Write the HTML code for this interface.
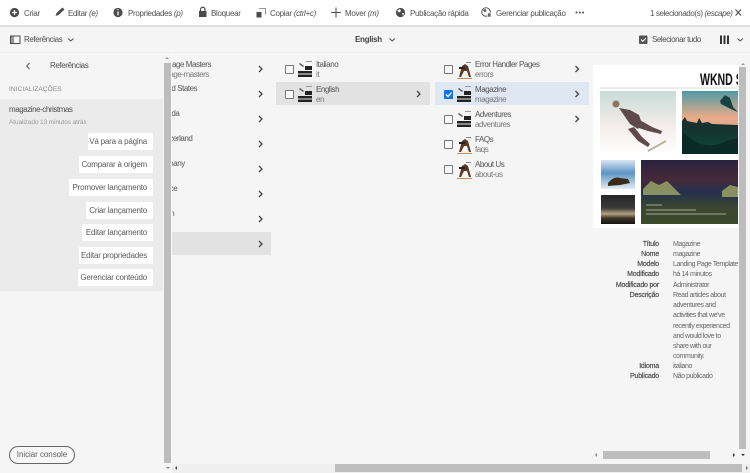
<!DOCTYPE html>
<html><head><meta charset="utf-8">
<style>
html,body{margin:0;padding:0;width:750px;height:473px;overflow:hidden;background:#f5f5f5;font-family:"Liberation Sans",sans-serif;color:#555;}
.a{position:absolute;white-space:nowrap;}
.t{position:absolute;white-space:nowrap;font-size:8px;line-height:10px;letter-spacing:-.3px;color:#505050;}
.n{letter-spacing:-.45px;margin-top:1px;color:#555;}
.b{margin-top:1px;}
.s{color:#777;}
i.o{font-style:italic;}
.btn{position:absolute;background:#fff;height:17px;line-height:18px;font-size:8px;letter-spacing:-.2px;color:#5a5a5a;text-align:right;padding-right:6px;box-sizing:border-box;border-radius:1px;}
.cb{position:absolute;border:1px solid #777;background:#f8f8f8;border-radius:1px;box-sizing:content-box;width:7px;height:7px;}
.m{position:absolute;font-size:7px;line-height:10px;letter-spacing:-.4px;white-space:nowrap;margin-top:1px;}
.l{right:91px;color:#444;letter-spacing:-.2px;-webkit-text-stroke:.15px #444;}
.v{left:673px;color:#666;}
</style></head><body>

<!-- top bar -->
<div class="a" style="left:0;top:0;width:750px;height:25px;background:#fff;"></div>
<div class="a" style="left:0;top:25px;width:750px;height:2px;background:#dedede;"></div>
<div class="a" style="left:0;top:52px;width:750px;height:1px;background:#efefef;"></div>

<svg class="a" style="left:0;top:0" width="750" height="53" viewBox="0 0 750 53">
 <circle cx="14.500" cy="12.500" r="4.600" fill="#4b4b4b"/><path d="M14.500 10v5M12 12.500h5" stroke="#fff" stroke-width="1.200"/>
 <path d="M55.500 16l1-3 6-5.500 2 2-6 5.500z" fill="#4b4b4b"/>
 <circle cx="118" cy="12.500" r="4.600" fill="#4b4b4b"/><path d="M118 11.500v3.800M118 9.300v1" stroke="#fff" stroke-width="1.300"/>
 <rect x="199" y="11" width="7.500" height="6" fill="#4b4b4b"/><path d="M200.500 11V9.500a2.200 2.200 0 0 1 4.500 0V11" fill="none" stroke="#4b4b4b" stroke-width="1.200"/>
 <rect x="256.500" y="12" width="5" height="5.500" fill="#4b4b4b"/><path d="M259 8.500h6.500v6" fill="none" stroke="#777" stroke-width=".8"/>
 <path d="M336 7.500v10M331 12.500h10" stroke="#4b4b4b" stroke-width="1"/>
 <circle cx="400.500" cy="12.500" r="4.600" fill="#4b4b4b"/><path d="M397 10.500l3-1.500 1 2-2 1.500zM402 13l2 0-1 3z" fill="#fff"/>
 <circle cx="486" cy="12" r="4.300" fill="none" stroke="#555" stroke-width="1"/><path d="M483 10l2.500-1 1 2-2 1.500z" fill="#555"/><rect x="487.500" y="13" width="3.500" height="4" fill="#666" stroke="#fff" stroke-width=".6"/>
 <circle cx="576.500" cy="12.500" r="1" fill="#4b4b4b"/><circle cx="579.800" cy="12.500" r="1" fill="#4b4b4b"/><circle cx="583" cy="12.500" r="1" fill="#4b4b4b"/>
 <path d="M735.500 9.500l5.500 6M741 9.500l-5.500 6" stroke="#4b4b4b" stroke-width="1.100"/>
 <rect x="10.500" y="36" width="9.500" height="7.500" fill="none" stroke="#4b4b4b" stroke-width="1"/><rect x="10.500" y="36" width="3.500" height="7.500" fill="#4b4b4b" opacity=".55"/>
 <path d="M68 38.500l2.700 2.500 2.700-2.500" fill="none" stroke="#4b4b4b" stroke-width="1"/>
 <path d="M389.500 38.500l2.700 2.500 2.700-2.500" fill="none" stroke="#4b4b4b" stroke-width="1"/>
 <rect x="639" y="35.500" width="8.500" height="8.500" rx="1" fill="#555"/><path d="M641 39.500l1.800 1.800 3-3" fill="none" stroke="#fff" stroke-width="1"/>
 <path d="M721 35.500v8.500M724.500 35.500v8.500M728 35.500v8.500" stroke="#333" stroke-width="2"/>
 <path d="M737.500 38.500l2.700 2.500 2.700-2.500" fill="none" stroke="#4b4b4b" stroke-width="1"/>
</svg>

<div class="t" style="left:24px;top:8px;margin-top:.5px;">Criar</div>
<div class="t" style="left:68px;top:8px;margin-top:.5px;">Editar <i class="o">(e)</i></div>
<div class="t" style="left:128px;top:8px;margin-top:.5px;">Propriedades <i class="o">(p)</i></div>
<div class="t" style="left:211px;top:8px;margin-top:.5px;">Bloquear</div>
<div class="t" style="left:270px;top:8px;margin-top:.5px;">Copiar <i class="o">(ctrl+c)</i></div>
<div class="t" style="left:345px;top:8px;margin-top:.5px;">Mover <i class="o">(m)</i></div>
<div class="t" style="left:410px;top:8px;margin-top:.5px;">Publicação rápida</div>
<div class="t" style="left:496px;top:8px;margin-top:.5px;">Gerenciar publicação</div>
<div class="t" style="left:650px;top:8px;margin-top:.5px;letter-spacing:-.38px;">1 selecionado(s) <i class="o">(escape)</i></div>
<div class="t b" style="left:24px;top:34px;letter-spacing:-.4px;">Referências</div>
<div class="t b" style="left:355px;top:34px;font-weight:bold;color:#444;">English</div>
<div class="t b" style="left:652px;top:34px;letter-spacing:-.45px;">Selecionar tudo</div>

<!-- sidebar -->
<svg class="a" style="left:0;top:53px" width="60" height="26"><path d="M29.500 10l-2.800 3 2.800 3" fill="none" stroke="#555" stroke-width="1"/></svg>
<div class="t" style="left:50px;top:61px;letter-spacing:-.4px;">Referências</div>
<div class="t" style="left:9px;top:85px;font-size:6.500px;color:#888;letter-spacing:.1px;">INICIALIZAÇÕES</div>
<div class="a" style="left:0;top:99px;width:163px;height:192px;background:#ebebeb;"></div>
<div class="t" style="left:9px;top:105px;letter-spacing:-.45px;">magazine-christmas</div>
<div class="t" style="left:9px;top:118px;font-size:6.500px;color:#999;letter-spacing:-.1px;">Atualizado 13 minutos atrás</div>
<div class="btn" style="left:88px;top:133px;width:65px;">Vá para a página</div>
<div class="btn" style="left:79px;top:156px;width:74px;">Comparar à origem</div>
<div class="btn" style="left:69px;top:179px;width:84px;">Promover lançamento</div>
<div class="btn" style="left:86px;top:202px;width:67px;">Criar lançamento</div>
<div class="btn" style="left:82px;top:224px;width:71px;">Editar lançamento</div>
<div class="btn" style="left:79px;top:247px;width:74px;">Editar propriedades</div>
<div class="btn" style="left:78px;top:269px;width:75px;">Gerenciar conteúdo</div>
<div class="a" style="left:9px;top:446px;width:66px;height:18px;border:1px solid #666;border-radius:9px;box-sizing:border-box;text-align:center;font-size:8px;line-height:16px;color:#5f5f5f;letter-spacing:-.05px;background:#f7f7f7;">Iniciar console</div>

<!-- sidebar scrollbar -->
<div class="a" style="left:164px;top:63px;width:7px;height:400px;background:#bdbdbd;"></div>
<div class="a" style="left:171px;top:53px;width:1px;height:420px;background:#fafafa;"></div>

<!-- column 1 -->
<div class="a" style="left:172px;top:53px;width:100px;height:411px;overflow:hidden;">
 <div class="a" style="left:0;top:179px;width:99px;height:23px;background:#e2e2e2;"></div>
 <div class="t n" style="left:-20px;top:6px;">Language Masters</div>
 <div class="t n s" style="left:-20px;top:16px;">language-masters</div>
 <div class="t n" style="left:-17px;top:30px;">United States</div>
 <div class="t n" style="left:-18px;top:55px;">Canada</div>
 <div class="t n" style="left:-16px;top:80px;">Switzerland</div>
 <div class="t n" style="left:-17px;top:105px;">Germany</div>
 <div class="t n" style="left:-17px;top:130px;">France</div>
 <div class="t n" style="left:-16px;top:155px;">Spain</div>
</div>
<svg class="a" style="left:255px;top:60px" width="12" height="195">
 <g fill="none" stroke="#444" stroke-width="1.300">
 <path d="M4 6l3 3-3 3"/><path d="M4 31l3 3-3 3"/><path d="M4 56l3 3-3 3"/><path d="M4 81l3 3-3 3"/><path d="M4 106l3 3-3 3"/><path d="M4 131l3 3-3 3"/><path d="M4 156l3 3-3 3"/><path d="M4 181l3 3-3 3"/>
 </g>
</svg>

<!-- column 2 -->
<div class="a" style="left:276px;top:82px;width:154px;height:23px;background:#e2e2e2;"></div>
<div class="cb" style="left:285px;top:65px;"></div>
<div class="cb" style="left:285px;top:90px;"></div>
<div class="t n" style="left:316px;top:59px;">Italiano</div><div class="t n s" style="left:316px;top:69px;">it</div>
<div class="t n" style="left:316px;top:84px;">English</div><div class="t n s" style="left:316px;top:94px;">en</div>

<!-- column 3 -->
<div class="a" style="left:435px;top:82px;width:154px;height:23px;background:#dee7f2;"></div>
<div class="cb" style="left:444px;top:65px;"></div>
<div class="a" style="left:444px;top:90px;width:9px;height:9px;background:#1473e6;border-radius:1px;"></div>
<div class="cb" style="left:444px;top:115px;"></div>
<div class="cb" style="left:444px;top:140px;"></div>
<div class="cb" style="left:444px;top:165px;"></div>
<div class="t n" style="left:475px;top:59px;">Error Handler Pages</div><div class="t n s" style="left:475px;top:69px;">errors</div>
<div class="t n" style="left:475px;top:84px;">Magazine</div><div class="t n s" style="left:475px;top:94px;">magazine</div>
<div class="t n" style="left:475px;top:109px;">Adventures</div><div class="t n s" style="left:475px;top:119px;">adventures</div>
<div class="t n" style="left:475px;top:134px;">FAQs</div><div class="t n s" style="left:475px;top:144px;">faqs</div>
<div class="t n" style="left:475px;top:159px;">About Us</div><div class="t n s" style="left:475px;top:169px;">about-us</div>

<svg class="a" style="left:270px;top:55px" width="330" height="130">
 <path d="M176 39.500l2 2 3.500-4" fill="none" stroke="#fff" stroke-width="1.300"/>
 <g fill="none" stroke="#444" stroke-width="1.300">
  <path d="M147 36l3 3-3 3"/>
  <path d="M305.500 11l3 3-3 3"/><path d="M305.500 36l3 3-3 3"/><path d="M305.500 61l3 3-3 3"/>
 </g>
 <g fill="#222" transform="translate(0,-1)">
  <path d="M28 17h14v2.500H28zM28 20.500h14v2.500H28zM35 12h7v4h-7z"/><path d="M30 9l4 3-1 1-4-3z" fill="#555"/><path d="M36 7h6v1h-6z" fill="#999"/>
  <path d="M28 42h14v2.500H28zM28 45.500h14v2.500H28zM35 37h7v4h-7z"/><path d="M30 34l4 3-1 1-4-3z" fill="#555"/><path d="M36 32h6v1h-6z" fill="#999"/>
  <path d="M187 42h14v2.500h-14zM187 45.500h14v2.500h-14zM194 37h7v4h-7z"/><path d="M189 34l4 3-1 1-4-3z" fill="#555"/><path d="M195 32h6v1h-6z" fill="#999"/>
  <path d="M187 67h14v2.500h-14zM187 70.500h14v2.500h-14zM194 62h7v4h-7z"/><path d="M189 59l4 3-1 1-4-3z" fill="#555"/><path d="M195 57h6v1h-6z" fill="#999"/>
 </g>
 <g>
  <path d="M192 11l3-2 3 2 3 11h-2l-2-6h-3l-3 6h-2z" fill="#5a3a22"/><path d="M189 12h6v2h-6z" fill="#222"/><path d="M187 23h15v1h-15z" fill="#c98a55"/><path d="M196 7h5v1h-5z" fill="#888"/>
  <path d="M192 86l3-2 3 2 3 11h-2l-2-6h-3l-3 6h-2z" fill="#5a3a22"/><path d="M189 87h6v2h-6z" fill="#222"/><path d="M187 98h15v1h-15z" fill="#c98a55"/><path d="M196 82h5v1h-5z" fill="#888"/>
  <path d="M192 111l3-2 3 2 3 11h-2l-2-6h-3l-3 6h-2z" fill="#5a3a22"/><path d="M189 112h6v2h-6z" fill="#222"/><path d="M187 123h15v1h-15z" fill="#c98a55"/><path d="M196 107h5v1h-5z" fill="#888"/>
 </g>
</svg>

<!-- preview -->
<div class="a" style="left:593px;top:65px;width:146px;height:163px;background:#fff;overflow:hidden;"></div>
<div class="a" style="left:700px;top:70px;font-size:17px;line-height:20px;font-weight:bold;color:#111;transform:scaleX(.62);transform-origin:0 0;">WKND SITE</div>
<div class="a" style="left:738px;top:65px;width:12px;height:163px;background:#f5f5f5;"></div>
<div class="a" style="left:600px;top:87px;width:138px;height:2px;background:#ececec;"></div>
<svg class="a" style="left:600px;top:91px" width="138" height="134" viewBox="0 0 138 134">
 <defs>
  <linearGradient id="g1" x1="0" y1="0" x2="0" y2="1"><stop offset="0" stop-color="#c9dcd8"/><stop offset=".55" stop-color="#f3ecea"/><stop offset="1" stop-color="#fff"/></linearGradient>
  <linearGradient id="g2" x1="0" y1="0" x2="0" y2="1"><stop offset="0" stop-color="#4f9aa6"/><stop offset=".42" stop-color="#e9ab8a"/><stop offset=".56" stop-color="#e0a88a"/><stop offset=".6" stop-color="#15322f"/><stop offset="1" stop-color="#0f4a42"/></linearGradient>
  <linearGradient id="g3" x1="0" y1="0" x2="0" y2="1"><stop offset="0" stop-color="#d8e5f2"/><stop offset=".45" stop-color="#5f94c6"/><stop offset=".75" stop-color="#a7c5de"/><stop offset="1" stop-color="#e2ecf2"/></linearGradient>
  <linearGradient id="g4" x1="0" y1="0" x2="0" y2="1"><stop offset="0" stop-color="#26262a"/><stop offset=".45" stop-color="#3a3a38"/><stop offset=".65" stop-color="#b0a27f"/><stop offset=".8" stop-color="#3b3528"/><stop offset="1" stop-color="#141412"/></linearGradient>
  <linearGradient id="g5" x1="0" y1="0" x2="0" y2="1"><stop offset="0" stop-color="#2a2240"/><stop offset=".3" stop-color="#46293a"/><stop offset=".5" stop-color="#24304f"/><stop offset=".75" stop-color="#3b4630"/><stop offset="1" stop-color="#3a4a2a"/></linearGradient>
 </defs>
 <rect x="0" y="0" width="76" height="63" fill="url(#g1)"/>
 <path d="M19 17L30 19L39 24L42 33L38 38L30 33Z" fill="#5e4a4a"/>
 <path d="M38 28L52 36L62 40L61 43L48 40L36 36Z" fill="#5e4a4a"/>
 <path d="M34 36L42 46L50 53L48 56L38 50L28 38Z" fill="#5e4a4a"/>
 <path d="M48 60L66 50" stroke="#b9b2a5" stroke-width="2"/>
 <circle cx="16" cy="13" r="3.500" fill="#8a7560"/>
 <rect x="82" y="0" width="56" height="63" fill="url(#g2)"/>
 <path d="M82 30l3-4 2 4 10 2 2-5 3 5 6-1 4 2 26 1v4H82z" fill="#15322f"/>
 <path d="M82 40q20 22 45 10l11-3v16H82z" fill="#0a2a27"/>
 <path d="M120 10l5-6 5 3 3 9 5 5-5-2-6-3-6-3z" fill="#17403f"/>
 <rect x="1" y="69" width="34" height="29" fill="url(#g3)"/>
 <path d="M8 92q6-7 12-5l8 1 2 4-10 2-12 1z" fill="#3a2a18"/>
 <rect x="1" y="104" width="34" height="29" fill="url(#g4)"/>
 <rect x="41" y="69" width="97" height="64" fill="url(#g5)"/>
 <path d="M43 98l8-8 8 4 8-4 8 8 6 6H43zM122 100l8-6 8 2v10h-16z" fill="#a9b16a" opacity=".75"/>
 <path d="M46 114h16M46 119h50M46 123h80" stroke="#cfcfc0" stroke-width="1" opacity=".7"/>
</svg>
<div class="a" style="left:593px;top:225px;width:145px;height:3px;background:#fff;"></div>

<!-- metadata -->
<div class="m l" style="top:239px;">Título</div><div class="m v" style="top:239px;">Magazine</div>
<div class="m l" style="top:249px;">Nome</div><div class="m v" style="top:249px;">magazine</div>
<div class="m l" style="top:259px;">Modelo</div><div class="m v" style="top:259px;">Landing Page Template</div>
<div class="m l" style="top:269px;">Modificado</div><div class="m v" style="top:269px;">há 14 minutos</div>
<div class="m l" style="top:280px;">Modificado por</div><div class="m v" style="top:280px;">Administrator</div>
<div class="m l" style="top:290px;">Descrição</div>
<div class="m v" style="top:290px;">Read articles about</div>
<div class="m v" style="top:300px;">adventures and</div>
<div class="m v" style="top:310px;">activities that we've</div>
<div class="m v" style="top:321px;">recently experienced</div>
<div class="m v" style="top:331px;">and would love to</div>
<div class="m v" style="top:341px;">share with our</div>
<div class="m v" style="top:351px;">community.</div>
<div class="m l" style="top:361px;">Idioma</div><div class="m v" style="top:361px;">italiano</div>
<div class="m l" style="top:371px;">Publicado</div><div class="m v" style="top:371px;">Não publicado</div>

<!-- preview scrollbars -->
<div class="a" style="left:739px;top:67px;width:7px;height:382px;background:#bdbdbd;"></div>
<div class="a" style="left:603px;top:451px;width:107px;height:8px;background:#bdbdbd;"></div>
<!-- bottom scrollbar -->
<div class="a" style="left:172px;top:464px;width:578px;height:9px;background:#efefef;"></div>
<div class="a" style="left:335px;top:464px;width:407px;height:8px;background:#bdbdbd;"></div>
<svg class="a" style="left:0;top:440px" width="750" height="33" viewBox="0 0 750 33">
 <path d="M177 26l-2 2 2 2z" fill="#444"/>
 <path d="M746 26l2 2-2 2z" fill="#666"/>
 <path d="M597 13l-2 2 2 2z" fill="#888"/>
 <path d="M733 13l2 2-2 2z" fill="#333"/>
 <path d="M741 14l2 2 2-2z" fill="#333"/>
 <path d="M166 27l2 2 2-2z" fill="#888"/>
</svg>
<svg class="a" style="left:160px;top:50px" width="590" height="20"><path d="M5 9l2-2 2 2zM581 15l2-2 2 2z" fill="#999"/></svg>
</body></html>
